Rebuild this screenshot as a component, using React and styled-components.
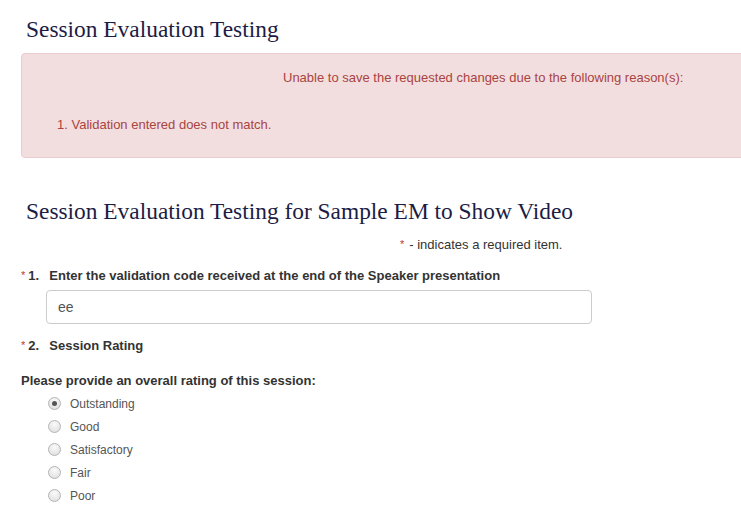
import React from "react";
import styled, { createGlobalStyle } from "styled-components";

const Global = createGlobalStyle`
  html, body { margin: 0; padding: 0; background: #fff; overflow: hidden; }
  body { font-family: "Liberation Sans", Arial, sans-serif; color: #333; }
`;

const Page = styled.div`
  width: 741px;
  height: 513px;
  overflow: hidden;
  padding: 0 0 0 21px;
  box-sizing: border-box;
`;

const Title = styled.h1`
  font-family: "Liberation Serif", "Times New Roman", serif;
  font-weight: normal;
  font-size: 23.4px;
  line-height: 26px;
  color: #1c1c44;
  margin: ${(p) => p.$top}px 0 0 5px;
`;

const Alert = styled.div`
  margin-top: 11px;
  width: 760px;
  height: 105px;
  box-sizing: border-box;
  background: #f2dede;
  border: 1px solid #ebccd1;
  border-radius: 4px;
  color: #a94442;
  font-size: 13px;
  padding: 16px 0 0 35px;
`;

const AlertHead = styled.div`
  padding-left: 226px;
  line-height: 16px;
`;

const AlertList = styled.ol`
  margin: 31px 0 0;
  padding: 0;
  list-style: none;
  line-height: 16px;
`;

const Legend = styled.div`
  margin: 14px 0 0 379px;
  font-size: 13px;
  line-height: 14px;
  color: #333;
`;

const Req = styled.span`
  color: #c0392b;
  font-size: 11px;
  font-weight: normal;
  position: relative;
  top: -1px;
  margin-right: ${(p) => p.$gap || 0}px;
`;

const Question = styled.div`
  margin-top: ${(p) => p.$top}px;
  display: flex;
  align-items: baseline;
  font-weight: bold;
  font-size: 13px;
  line-height: 16px;
  color: #333;
`;

const Num = styled.span`
  margin-left: 3px;
  width: 21px;
`;

const Input = styled.input`
  display: block;
  margin: 6px 0 0 25px;
  width: 546px;
  height: 34px;
  box-sizing: border-box;
  border: 1px solid #ccc;
  border-radius: 4px;
  padding: 0 11px;
  font-family: "Liberation Sans", Arial, sans-serif;
  font-size: 14px;
  color: #555;
  outline: none;
`;

const Prompt = styled.div`
  margin-top: 19px;
  font-weight: bold;
  font-size: 13px;
  line-height: 16px;
  color: #333;
`;

const Options = styled.div`
  margin: 3px 0 0 27px;
  display: flex;
  flex-direction: column;
`;

const Option = styled.label`
  display: flex;
  align-items: center;
  height: 23px;
  font-size: 12px;
  color: #555;
`;

const Radio = styled.span`
  width: 13px;
  height: 13px;
  box-sizing: border-box;
  border-radius: 50%;
  border: 1px solid #b4b4b4;
  background: radial-gradient(circle at 50% 30%, #fafafa 0%, #dcdcdc 100%);
  margin-right: 9px;
  display: flex;
  align-items: center;
  justify-content: center;
  &::after {
    content: "";
    display: ${(p) => (p.$checked ? "block" : "none")};
    width: 5px;
    height: 5px;
    border-radius: 50%;
    background: #555;
  }
`;

const options = ["Outstanding", "Good", "Satisfactory", "Fair", "Poor"];

export default function App() {
  return (
    <Page>
      <Global />
      <Title $top={16}>Session Evaluation Testing</Title>
      <Alert>
        <AlertHead>Unable to save the requested changes due to the following reason(s):</AlertHead>
        <AlertList>
          <li>1. Validation entered does not match.</li>
        </AlertList>
      </Alert>
      <Title $top={40}>Session Evaluation Testing for Sample EM to Show Video</Title>
      <Legend>
        <Req $gap={5}>*</Req>- indicates a required item.
      </Legend>
      <Question $top={16}>
        <Req>*</Req>
        <Num>1.</Num>
        Enter the validation code received at the end of the Speaker presentation
      </Question>
      <Input defaultValue="ee" />
      <Question $top={14}>
        <Req>*</Req>
        <Num>2.</Num>
        Session Rating
      </Question>
      <Prompt>Please provide an overall rating of this session:</Prompt>
      <Options>
        {options.map((o, i) => (
          <Option key={o}>
            <Radio $checked={i === 0} />
            {o}
          </Option>
        ))}
      </Options>
    </Page>
  );
}
